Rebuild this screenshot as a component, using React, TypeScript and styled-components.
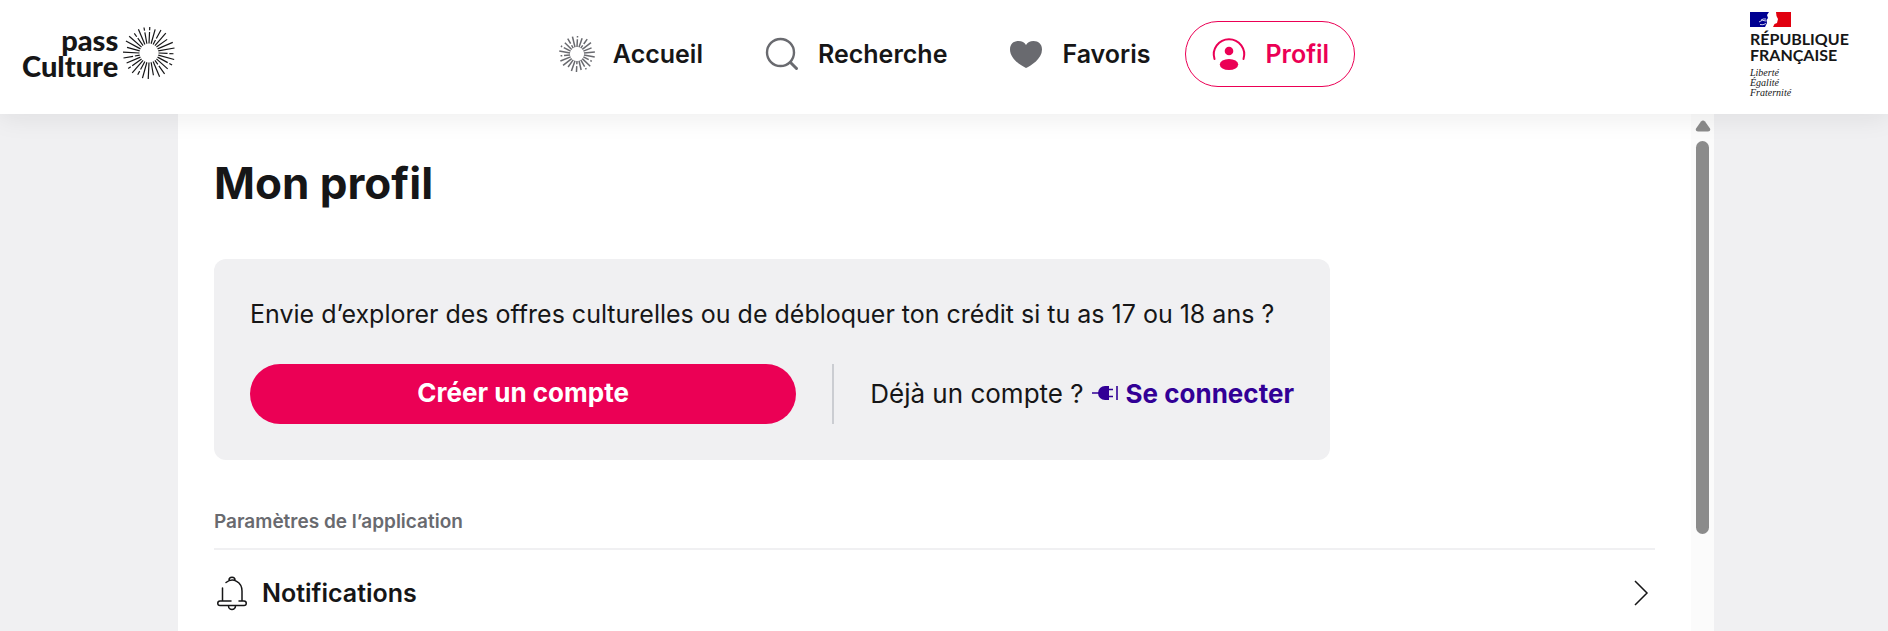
import React from "react";
import styled, { createGlobalStyle } from "styled-components";

const ink = "#161617";
const grey = "#696a6f";
const pink = "#eb0055";
const purple = "#320096";
const surface = "#f0f0f2";

const GlobalStyle = createGlobalStyle`
  * { box-sizing: border-box; }
  body { margin: 0; background: ${surface}; color: ${ink}; font-family: Inter, "Liberation Sans", sans-serif; }
  h1, h2, p { margin: 0; padding: 0; }
  a { color: inherit; text-decoration: none; }
  svg { display: block; flex: none; }
`;

const Page = styled.div`
  display: flex;
  flex-direction: column;
  height: 100vh;
  overflow: hidden;
`;

const Header = styled.header`
  position: relative;
  z-index: 1;
  display: grid;
  grid-template-columns: 1fr auto 1fr;
  align-items: start;
  flex: none;
  height: 114px;
  padding: 0 22px;
  background: #fff;
  box-shadow: 0 4px 24px rgba(22, 22, 23, 0.08);
`;

const Brand = styled.a`
  display: flex;
  align-items: center;
  gap: 5px;
  justify-self: start;
  margin-top: 27px;
`;

const BrandName = styled.span`
  display: flex;
  flex-direction: column;
  font: 900 29px/26px Lato, sans-serif;
  text-align: right;
`;

const Nav = styled.nav`
  display: flex;
  gap: 9px;
  margin-top: 21px;
`;

const NavItem = styled.a<{ $active?: boolean }>`
  display: flex;
  align-items: center;
  gap: 18px;
  height: 66px;
  padding: 0 25px;
  border: 1px solid ${(p) => (p.$active ? pink : "transparent")};
  border-radius: 33px;
  color: ${(p) => (p.$active ? pink : ink)};
  font-size: 25px;
  font-weight: 600;
  svg { color: ${(p) => (p.$active ? pink : grey)}; }
`;

const Republic = styled.div`
  justify-self: end;
  width: 100px;
  margin: 12px 16px 0 0;
`;

const RepublicName = styled.div`
  margin-top: 4px;
  font: 700 16px/16px Lato, sans-serif;
`;

const Motto = styled.div`
  margin-top: 5px;
  font: italic 10px/10px "Liberation Serif", serif;
`;

const Stage = styled.div`
  display: flex;
  justify-content: center;
  flex: 1;
  min-height: 0;
  padding-left: 4px;
`;

const Panel = styled.div`
  display: flex;
  width: 100%;
  max-width: 1536px;
  background: #fff;
`;

const Content = styled.main`
  flex: 1;
  min-width: 0;
  padding: 42px 36px 0;
`;

const Title = styled.h1`
  font-size: 44px;
  line-height: 54px;
  font-weight: 700;
`;

const Card = styled.section`
  max-width: 1116px;
  margin-top: 49px;
  padding: 36px;
  border-radius: 12px;
  background: ${surface};
`;

const Pitch = styled.p`
  font-size: 25px;
  line-height: 38px;
`;

const Actions = styled.div`
  display: flex;
  align-items: stretch;
  gap: 36px;
  margin-top: 31px;
`;

const SignUp = styled.button`
  flex: 1;
  height: 60px;
  padding: 0 24px 2px;
  border: 0;
  border-radius: 30px;
  background: ${pink};
  color: #fff;
  font: 700 26px/36px Inter, sans-serif;
`;

const Divider = styled.span`
  width: 2px;
  background: #cbcdd2;
`;

const LogIn = styled.p`
  display: flex;
  align-items: center;
  gap: 8px;
  padding-bottom: 2px;
  font-size: 26px;
`;

const LogInLink = styled.a`
  display: flex;
  align-items: center;
  gap: 8px;
  color: ${purple};
  font-weight: 700;
`;

const SectionTitle = styled.h2`
  margin-top: 50px;
  padding-bottom: 14px;
  border-bottom: 2px solid ${surface};
  color: ${grey};
  font-size: 19px;
  line-height: 24px;
  font-weight: 600;
`;

const Row = styled.a`
  display: flex;
  align-items: center;
  height: 86px;
  gap: 12px;
  font-size: 25px;
  font-weight: 600;
`;

const RowLabel = styled.span`
  flex: 1;
`;

const ScrollBar = styled.div`
  display: flex;
  flex-direction: column;
  align-items: center;
  width: 23px;
  padding-top: 6px;
  background: #fbfbfb;
`;

const Thumb = styled.div`
  width: 13px;
  height: 77%;
  margin-top: 9px;
  border-radius: 7px;
  background: #8b8b8b;
`;

// Rays alternate between whole lines and lines cut near their tip or root.
const cuts = [0.7, 0, 0.3, 0, 0.8, 0, 0, 0.55, 0];

function Sun({ size, rays, inner, width }: { size: number; rays: number; inner: number; width: number }) {
  const c = size / 2;
  return (
    <svg width={size} height={size} viewBox={`0 0 ${size} ${size}`} fill="none" stroke="currentColor" strokeWidth={width} aria-hidden="true">
      {Array.from({ length: rays }, (_, i) => {
        const a = (i * 2 * Math.PI) / rays;
        const cut = cuts[i % cuts.length];
        const outer = i % 3 === 1 ? c - 1.5 : c;
        return (
          <line
            key={i}
            x1={c + inner * Math.sin(a)}
            y1={c - inner * Math.cos(a)}
            x2={c + outer * Math.sin(a + 0.03)}
            y2={c - outer * Math.cos(a + 0.03)}
            strokeDasharray={cut ? `${(c - inner) * cut} 1.8 40` : undefined}
          />
        );
      })}
    </svg>
  );
}

export default function App() {
  return (
    <Page>
      <GlobalStyle />
      <Header>
        <Brand href="#" aria-label="pass Culture">
          <BrandName><span>pass</span><span>Culture</span></BrandName>
          <Sun size={52} rays={28} inner={9.5} width={1.2} />
        </Brand>
        <Nav>
          <NavItem href="#"><Sun size={36} rays={22} inner={7} width={1.5} />Accueil</NavItem>
          <NavItem href="#">
            <svg width="36" height="36" viewBox="0 0 36 36" fill="none" stroke="currentColor" strokeWidth="2.4" strokeLinecap="round" aria-hidden="true">
              <circle cx="16.5" cy="16.5" r="13.5" /><path d="M26.500 26.500l6 6" strokeWidth="3" />
            </svg>
            Recherche
          </NavItem>
          <NavItem href="#">
            <svg width="36" height="36" viewBox="0 0 36 36" fill="currentColor" aria-hidden="true">
              <path d="M18 32C13 29.500 2 23 2 13.500C2 8 5.500 5 10.500 5C14 5 16.500 6.500 18 9C19.500 6.500 22 5 25.500 5C30.500 5 34 8 34 13.500C34 23 23 29.500 18 32z" />
            </svg>
            Favoris
          </NavItem>
          <NavItem href="#" $active aria-current="page">
            <svg width="36" height="36" viewBox="0 0 36 36" fill="currentColor" aria-hidden="true">
              <path d="M3.500 23A15.200 15.200 0 1 1 32.500 23" fill="none" stroke="currentColor" strokeWidth="2" strokeLinecap="round" />
              <circle cx="18" cy="15" r="4.300" /><ellipse cx="18" cy="28.500" rx="9.200" ry="5.500" />
            </svg>
            Profil
          </NavItem>
        </Nav>
        <Republic>
          <svg width="41" height="15" viewBox="0 0 41 15" aria-hidden="true">
            <path d="M0 0h19l-2 3 1 3-1.500 2 .5 3-2 4H0z" fill="#000091" />
            <path d="M26 0h15v15H23l1.500-3 2.500-1 .5-2 .5-2-1.500-3z" fill="#e1000f" />
            <path d="M9 10q3-3 7-1M10 12.500q3 1 6-1M11 8q2-1.500 5-1" fill="none" stroke="#fff" strokeWidth="0.800" />
          </svg>
          <RepublicName>RÉPUBLIQUE<br />FRANÇAISE</RepublicName>
          <Motto>Liberté<br />Égalité<br />Fraternité</Motto>
        </Republic>
      </Header>
      <Stage>
        <Panel>
          <Content>
            <Title>Mon profil</Title>
            <Card>
              <Pitch>Envie d’explorer des offres culturelles ou de débloquer ton crédit si tu as 17 ou 18 ans ?</Pitch>
              <Actions>
                <SignUp type="button">Créer un compte</SignUp>
                <Divider />
                <LogIn>
                  Déjà un compte ?
                  <LogInLink href="#">
                    <svg width="26" height="16" viewBox="0 0 26 16" aria-hidden="true">
                      <path d="M0 8h7M15 4.500h6M15 11.500h6M25 1v14" stroke="currentColor" strokeWidth="1.600" />
                      <path d="M17 1v14h-4a7 7 0 0 1 0-14z" fill="currentColor" />
                    </svg>
                    Se connecter
                  </LogInLink>
                </LogIn>
              </Actions>
            </Card>
            <SectionTitle>Paramètres de l’application</SectionTitle>
            <Row href="#">
              <svg width="36" height="36" viewBox="0 0 36 36" fill="none" stroke="currentColor" strokeWidth="1.500" strokeLinecap="round" aria-hidden="true">
                <path d="M8.500 13v13M12 7.500C19 2 28 7 28 16v10M17 26H6a2.200 2.200 0 0 0 0 4.500h24a2.200 2.200 0 0 0 0-4.500h-5M15 5a3 2.800 0 0 1 6 0M14.500 31a3.500 3.500 0 0 0 7 0" />
              </svg>
              <RowLabel>Notifications</RowLabel>
              <svg width="30" height="30" viewBox="0 0 30 30" fill="none" stroke="currentColor" strokeWidth="1.500" aria-hidden="true">
                <path d="M10 3l12 12-12 12" />
              </svg>
            </Row>
          </Content>
          <ScrollBar aria-hidden="true">
            <svg width="16" height="12" viewBox="0 0 16 12"><path d="M6 1.500q2-2 4 0l5 7q1 3-2 3H3q-3 0-2-3z" fill="#8b8b8b" /></svg>
            <Thumb />
          </ScrollBar>
        </Panel>
      </Stage>
    </Page>
  );
}
